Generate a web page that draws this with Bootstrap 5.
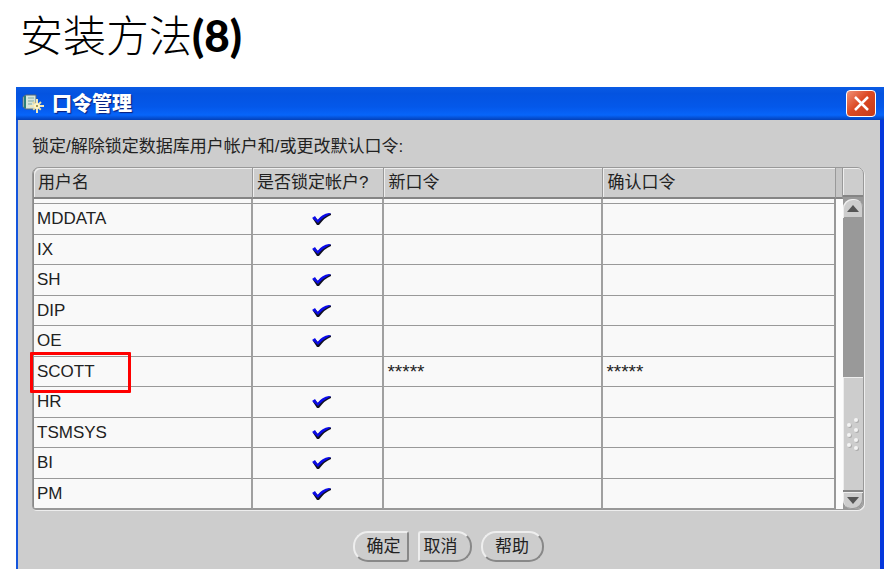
<!DOCTYPE html>
<html lang="zh-CN">
<head>
<meta charset="utf-8">
<meta name="viewport" content="width=device-width, initial-scale=1">
<title>安装方法(8)</title>
<link href="https://cdn.jsdelivr.net/npm/bootstrap@5.3.0/dist/css/bootstrap.min.css" rel="stylesheet">
<style>
body{background:#fff;color:#222;font-family:"Liberation Sans","Noto Sans CJK SC",sans-serif;font-size:17px;line-height:24px}
.slide{padding:6px 7px 8px 16px}
.slide-title{color:#000;font-family:Lato,"Noto Sans CJK SC",sans-serif;font-size:43px;line-height:60px;font-weight:300;padding-left:4px;margin-bottom:21px}
.slide-title b{font-size:44px;line-height:1;font-weight:900}
.dialog{background:#cdcdcd;border-left:2px solid #1455dc;border-right:4px solid #0537dc}
.titlebar{height:33px;margin:0 -4px 0 -2px;padding:0 8px 0 6px;background:linear-gradient(#0a5be4,#0453e0 20%,#0458ea 60%,#0765fa 85%,#0340b8)}
.titlebar h2{font-size:20px;line-height:32px;font-weight:900;color:#fff;text-shadow:1px 1px 1px #0a1e7a}
.close-x{width:30px;height:27px;border:1px solid #fff;border-radius:4px;background:linear-gradient(135deg,#f09278,#dc4a24 45%,#c43a18)}
.content-area{padding:15px 16px 7px 14px}
.frame{margin-top:8px;border:1px solid #999;border-radius:7px 7px 7px 4px;box-shadow:1px 1px 0 #eee}
.users{table-layout:fixed;border-collapse:separate;border-spacing:0;height:341px;border-left:1px solid #888;border-radius:6px 0 0 3px;background:#f9f9f9}
.users th{height:31px;padding:0 4px;font-weight:400;background:#cdcdcd;border-right:1px solid #999;border-bottom:2px solid #858585;box-shadow:inset 1px 1px 0 #eee;white-space:nowrap;line-height:28px}
.users th:first-child{border-top-left-radius:6px}
.users .gap-row td{height:5px;padding:0}
.users td{padding:1px 3px 0;border-right:2px solid #a0a0a0;border-bottom:1px solid #999;font-size:17px;line-height:20px}
.users tr>:last-child{border-right-color:#999}
.users td:nth-child(2){text-align:center}
.users td.secret{font-size:19px}
.users td svg{margin-left:8px}
.c-name{width:27.3%}.c-lock{width:16.4%}.c-new{width:27.3%}
.gutter{width:7px;background:#fcfcfc}
.gutter::before{content:"";display:block;height:31px;background:#c6c6c6;border-bottom:2px solid #858585;border-right:1px solid #999}
.scroller{width:20px;background:#999;border-radius:0 6px 6px 0}
.scroll-corner{height:29px;background:#cdcdcd;border-bottom:2px solid #858585;border-top-right-radius:6px;box-shadow:inset 1px 1px 0 #eee}
.scroll-btn{height:19px;border:0;padding:0;background:#cdcdcd;box-shadow:inset 1px 1px 0 #eee,inset -1px -1px 0 #999}
.scroll-up{border-radius:9px 9px 0 0;margin-top:2px}
.scroll-down{border-radius:0 0 9px 9px;border-top:2px solid #858585}
.track{height:159px}
.thumb{background:#cdcdcd;box-shadow:inset 1px 1px 0 #eee}
.picked{position:relative}
.picked::after{content:"";position:absolute;left:-4px;top:-5px;width:101px;height:41px;border:3px solid #f00;border-radius:1px}
.actions{padding-top:21px;gap:9px}
.actions button{height:31px;padding:0 7px 0 12px;font-size:17px;line-height:26px;color:#222;background:#cdcdcd;border:2px solid;border-color:#eee #888 #888 #eee;border-radius:15px}
.actions .b-ok{width:56px;padding:0 4px 0 10px;border-radius:15px 3px 3px 15px}
.actions .b-cancel{width:54px;padding:0 11px 0 3px;border-radius:3px 15px 15px 3px}
.actions .b-help{width:63px;padding:0 9px}
</style>
</head>
<body>
<svg class="d-none"><symbol id="tick" viewBox="0 0 20 13"><path d="M1 6 3 4 6 7 Q11 1 19 .5 L19 2 Q13 4 7 12 L5 12Z" fill="#112"/><path d="M0 5 3 3 5.500 7 Q10 1 17 0 L19 .5 Q11 4 6 10Z" fill="#0b0bea"/></symbol></svg>
<main class="slide">
<h1 class="slide-title">安装方法<b>(8)</b></h1>
<section class="dialog">
<header class="titlebar d-flex align-items-center">
<svg width="22" height="20" viewBox="0 0 22 20" class="me-2"><path d="M1 3 4 1h10v14H4L1 13Z" fill="#d6e6dc" stroke="#567"/><path d="M3 2v12" stroke="#2a7f78" stroke-width="2"/><path d="M6 4h6M6 7h6M6 10h4" stroke="#7fa8a0"/><path d="M15 5v14M8 12h14" stroke="#f3e9b8" stroke-width="2"/><path d="M11 8l8 8M19 8l-8 8" stroke="#e8dca0" stroke-width="2" stroke-dasharray="3 5"/><circle cx="15" cy="12" r="3" fill="#fff6c8"/><circle cx="15" cy="12" r="1" fill="#8a8030"/></svg>
<h2 class="mb-0">口令管理</h2>
<button type="button" class="close-x ms-auto p-0 d-flex align-items-center justify-content-center" aria-label="关闭"><svg width="17" height="17" viewBox="0 0 17 17"><path d="M2 2 15 15M15 2 2 15" stroke="#fff" stroke-width="2.500"/></svg></button>
</header>
<div class="content-area">
<p class="mb-0">锁定/解除锁定数据库用户帐户和/或更改默认口令:</p>
<div class="frame d-flex">
<table class="users flex-grow-1">
<thead><tr><th class="c-name" scope="col">用户名</th><th class="c-lock" scope="col">是否锁定帐户?</th><th class="c-new" scope="col">新口令</th><th scope="col">确认口令</th></tr></thead>
<tbody>
<tr class="gap-row"><td></td><td></td><td></td><td></td></tr>
<tr><td>MDDATA</td><td><svg width="20" height="13" role="img" aria-label="是"><use href="#tick"/></svg></td><td></td><td></td></tr>
<tr><td>IX</td><td><svg width="20" height="13" role="img" aria-label="是"><use href="#tick"/></svg></td><td></td><td></td></tr>
<tr><td>SH</td><td><svg width="20" height="13" role="img" aria-label="是"><use href="#tick"/></svg></td><td></td><td></td></tr>
<tr><td>DIP</td><td><svg width="20" height="13" role="img" aria-label="是"><use href="#tick"/></svg></td><td></td><td></td></tr>
<tr><td>OE</td><td><svg width="20" height="13" role="img" aria-label="是"><use href="#tick"/></svg></td><td></td><td></td></tr>
<tr><td class="picked">SCOTT</td><td></td><td class="secret">*****</td><td class="secret">*****</td></tr>
<tr><td>HR</td><td><svg width="20" height="13" role="img" aria-label="是"><use href="#tick"/></svg></td><td></td><td></td></tr>
<tr><td>TSMSYS</td><td><svg width="20" height="13" role="img" aria-label="是"><use href="#tick"/></svg></td><td></td><td></td></tr>
<tr><td>BI</td><td><svg width="20" height="13" role="img" aria-label="是"><use href="#tick"/></svg></td><td></td><td></td></tr>
<tr><td>PM</td><td><svg width="20" height="13" role="img" aria-label="是"><use href="#tick"/></svg></td><td></td><td></td></tr>
</tbody>
</table>
<div class="gutter flex-shrink-0"></div>
<div class="scroller flex-shrink-0 d-flex flex-column">
<div class="scroll-corner"></div>
<button type="button" class="scroll-btn scroll-up" aria-label="向上滚动"><svg class="d-block mx-auto" width="12" height="7" viewBox="0 0 12 7"><path d="M6 0 12 7H0Z" fill="#555"/></svg></button>
<div class="track"></div>
<div class="thumb flex-grow-1 d-flex align-items-center justify-content-center"><svg width="14" height="34" viewBox="0 0 14 34"><g fill="#aaa"><circle cx="11" cy="4" r="2"/><circle cx="4" cy="9" r="2"/><circle cx="11" cy="14" r="2"/><circle cx="4" cy="19" r="2"/><circle cx="11" cy="24" r="2"/><circle cx="4" cy="29" r="2"/><circle cx="11" cy="32" r="2"/></g><g fill="#f4f4f4"><circle cx="10" cy="3" r="2"/><circle cx="3" cy="8" r="2"/><circle cx="10" cy="13" r="2"/><circle cx="3" cy="18" r="2"/><circle cx="10" cy="23" r="2"/><circle cx="3" cy="28" r="2"/><circle cx="10" cy="31" r="2"/></g></svg></div>
<button type="button" class="scroll-btn scroll-down" aria-label="向下滚动"><svg class="d-block mx-auto" width="12" height="7" viewBox="0 0 12 7"><path d="M0 0H12L6 7Z" fill="#555"/></svg></button>
</div>
</div>
<div class="actions d-flex justify-content-center">
<button type="button" class="b-ok">确定</button>
<button type="button" class="b-cancel">取消</button>
<button type="button" class="b-help">帮助</button>
</div>
</div>
</section>
</main>
<script src="https://cdn.jsdelivr.net/npm/bootstrap@5.3.0/dist/js/bootstrap.bundle.min.js"></script>
</body>
</html>
